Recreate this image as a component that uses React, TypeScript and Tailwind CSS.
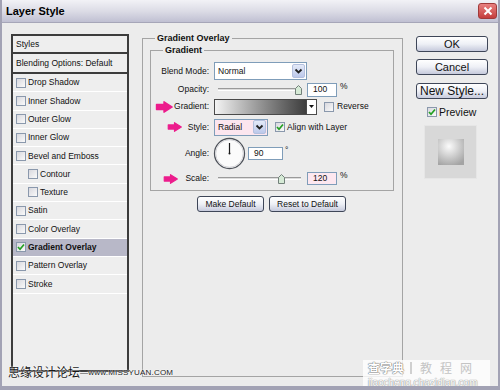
import React from "react";

const items = [
  { label: "Drop Shadow" },
  { label: "Inner Shadow" },
  { label: "Outer Glow" },
  { label: "Inner Glow" },
  { label: "Bevel and Emboss" },
  { label: "Contour", indent: true },
  { label: "Texture", indent: true },
  { label: "Satin" },
  { label: "Color Overlay" },
  { label: "Gradient Overlay", checked: true, active: true },
  { label: "Pattern Overlay" },
  { label: "Stroke" },
];

function Check({ checked = false, size = "w-[10px] h-[10px]" }: { checked?: boolean; size?: string }) {
  return (
    <span
      className={`${size} shrink-0 border border-[#8a98ac] bg-gradient-to-br from-[#d8d8de] to-[#fafafa] flex items-center justify-center`}
    >
      {checked && (
        <svg width="8" height="8" viewBox="0 0 8 8">
          <polyline points="1,4 3,6.2 7,1.5" fill="none" stroke="#22a022" strokeWidth="1.7" />
        </svg>
      )}
    </span>
  );
}

function Arrow({ w = 17 }: { w?: number }) {
  return (
    <svg width={w} height="12" viewBox="0 0 18 12" className="shrink-0">
      <path
        d="M1.5 3.5 H9 V0.8 L17.2 6 L9 11.2 V8.5 H1.5 Z"
        fill="#ec1c8c"
        stroke="#ec1c8c"
        strokeWidth="1.4"
        strokeLinejoin="round"
      />
    </svg>
  );
}

function DropBtn({ h = "h-[14px]" }: { h?: string }) {
  return (
    <span
      className={`w-[13px] ${h} shrink-0 rounded-[2px] border border-[#b4c0de] bg-gradient-to-b from-[#e4eaf8] to-[#bcc8ea] flex items-center justify-center`}
    >
      <svg width="9" height="7" viewBox="0 0 9 7">
        <polyline points="1.5,1.5 4.5,4.5 7.5,1.5" fill="none" stroke="#222" strokeWidth="1.8" />
      </svg>
    </span>
  );
}

function Slider({ thumb }: { thumb: number }) {
  return (
    <div className="relative w-[91px] h-[12px] flex items-center px-[4px]">
      <div className="w-full h-[3px] border-t border-[#9a9a9a] border-b border-b-white bg-[#dcdcdc]" />
      <svg
        width="7"
        height="10"
        viewBox="0 0 7 10"
        className="absolute top-[1px]"
        style={{ left: thumb }}
      >
        <path d="M0.5 3.5 L3.5 0.5 L6.5 3.5 V9.5 H0.5 Z" fill="#d6ead6" stroke="#72807a" strokeWidth="1" />
      </svg>
    </div>
  );
}

function Btn({ children, className = "" }: { children: React.ReactNode; className?: string }) {
  return (
    <div
      className={`h-[16px] rounded-[3px] border border-[#3e4658] bg-gradient-to-b from-white via-[#eef0f6] to-[#c6cadc] flex items-center justify-center ${className}`}
    >
      {children}
    </div>
  );
}

export default function App() {
  return (
    <div className="relative w-[500px] h-[390px] overflow-hidden bg-[#ececec] border-x-2 border-b-[4px] border-[#a2a2b4] flex flex-col font-['Liberation_Sans',Arial,sans-serif] text-[8.5px] text-[#111] leading-none">
      {/* Title bar */}
      <div className="h-[23px] shrink-0 flex items-center justify-between bg-gradient-to-b from-[#f2f2f6] via-[#dcdce6] to-[#c0c0d2] border-b border-[#a6a6b8]">
        <span className="pl-[4px] text-[11px] font-bold text-black">Layer Style</span>
        <span className="mr-[1px] w-[19px] h-[16px] rounded-[3px] border border-[#a03a3a] bg-gradient-to-b from-[#e88080] to-[#c43c3c] flex items-center justify-center">
          <svg width="10" height="10" viewBox="0 0 10 10">
            <path d="M1.5 1.5 L8.5 8.5 M8.5 1.5 L1.5 8.5" stroke="white" strokeWidth="2" />
          </svg>
        </span>
      </div>

      <div className="flex items-start">
        {/* Styles list */}
        <div className="ml-[9px] mt-[11px] w-[118px] h-[338px] border-2 border-[#3c3c3c] bg-[#eeeeee] flex flex-col">
          <div className="h-[18px] shrink-0 flex items-center pl-[3px] border-b-2 border-[#3c3c3c]">Styles</div>
          <div className="h-[20px] shrink-0 flex items-center pl-[3px] border-b-2 border-[#3c3c3c]">
            Blending Options: Default
          </div>
          {items.map((it) => (
            <div
              key={it.label}
              className={`h-[18.3px] shrink-0 flex items-center gap-[2px] border-b border-white ${
                it.indent ? "pl-[15px]" : "pl-[3px]"
              } ${it.active ? "bg-[#b8b8c8] font-bold" : ""}`}
            >
              <Check checked={it.checked} />
              <span>{it.label}</span>
            </div>
          ))}
        </div>

        {/* Gradient Overlay group */}
        <div className="relative ml-[13px] mt-[15px] w-[261px] h-[339px] border border-[#a4a4a4] flex flex-col">
          <span className="absolute left-[12px] -top-[6.5px] px-[2px] bg-[#ececec] text-[9px] font-bold leading-[11px]">
            Gradient Overlay
          </span>

          <div className="relative ml-[7px] mt-[11px] w-[244px] h-[141px] border border-[#a4a4a4] flex flex-col">
            <span className="absolute left-[12px] -top-[6.5px] px-[2px] bg-[#ececec] text-[9px] font-bold leading-[11px]">
              Gradient
            </span>

            {/* Blend Mode */}
            <div className="mt-[11px] h-[18px] flex items-center">
              <div className="w-[58px] text-right">Blend Mode:</div>
              <div className="ml-[5px] w-[93px] h-[18px] border border-[#7f9db9] bg-white flex items-center justify-between pl-[3px] pr-[1px]">
                <span>Normal</span>
                <DropBtn />
              </div>
            </div>

            {/* Opacity */}
            <div className="mt-[2px] h-[15px] flex items-center">
              <div className="w-[58px] text-right">Opacity:</div>
              <div className="ml-[5px]">
                <Slider thumb={81} />
              </div>
              <div className="ml-[2px] w-[30px] h-[14px] border border-[#7f9db9] bg-white flex items-center pl-[5px]">100</div>
              <span className="ml-[3px] self-start">%</span>
            </div>

            {/* Gradient */}
            <div className="mt-[1px] h-[17px] flex items-center">
              <div className="w-[58px] flex items-center justify-end">
                <Arrow w={18} />
                <span className="ml-[1px]">Gradient:</span>
              </div>
              <div className="ml-[5px] w-[103px] h-[16px] border border-[#4a4a4a] flex">
                <div className="flex-1 bg-gradient-to-r from-[#f4f4f4] to-[#3e3e3e]" />
                <div className="w-[10px] border-l border-[#4a4a4a] bg-white flex items-center justify-center">
                  <svg width="5" height="3" viewBox="0 0 5 3">
                    <path d="M0 0 H5 L2.5 3 Z" fill="#111" />
                  </svg>
                </div>
              </div>
              <span className="ml-[7px]">
                <Check />
              </span>
              <span className="ml-[3px]">Reverse</span>
            </div>

            {/* Style */}
            <div className="mt-[3px] h-[18px] flex items-center">
              <div className="w-[58px] flex items-center justify-end">
                <Arrow w={15} />
                <span className="ml-[6px]">Style:</span>
              </div>
              <div className="ml-[5px] w-[54px] h-[17px] border border-[#7f9db9] bg-[#fce6ef] flex items-center justify-between pl-[3px] pr-[1px]">
                <span>Radial</span>
                <DropBtn />
              </div>
              <span className="ml-[7px]">
                <Check checked />
              </span>
              <span className="ml-[2px]">Align with Layer</span>
            </div>

            {/* Angle */}
            <div className="mt-[1px] h-[32px] flex items-center">
              <div className="w-[58px] text-right">Angle:</div>
              <svg width="33" height="33" viewBox="0 0 33 33" className="ml-[4px]">
                <circle cx="16.5" cy="16.5" r="15" fill="#fbfbfb" stroke="#50545c" strokeWidth="1.3" />
                <circle cx="16.5" cy="16.5" r="13.8" fill="none" stroke="#d4d4d8" strokeWidth="1" />
                <line x1="16.5" y1="16.5" x2="16.5" y2="6" stroke="#1a1a1a" strokeWidth="1.2" />
                <circle cx="16.5" cy="16.5" r="1" fill="#1a1a1a" />
              </svg>
              <div className="ml-[2px] w-[35px] h-[13px] border border-[#7f9db9] bg-white flex items-center pl-[5px]">90</div>
              <span className="ml-[2px] self-start mt-[9px]">°</span>
            </div>

            {/* Scale */}
            <div className="mt-[2px] h-[15px] flex items-center">
              <div className="w-[58px] flex items-center justify-end">
                <Arrow w={15} />
                <span className="ml-[7px]">Scale:</span>
              </div>
              <div className="ml-[5px]">
                <Slider thumb={64} />
              </div>
              <div className="ml-[2px] w-[30px] h-[13px] border border-[#7f9db9] bg-[#fde8f0] flex items-center pl-[5px]">120</div>
              <span className="ml-[3px] self-start">%</span>
            </div>
          </div>

          <div className="mt-[5px] ml-[54px] flex gap-[5px]">
            <Btn className="w-[67px]">Make Default</Btn>
            <Btn className="w-[77px]">Reset to Default</Btn>
          </div>
        </div>

        {/* Right column */}
        <div className="ml-[13px] mt-[13px] w-[72px] flex flex-col text-[11px]">
          <Btn className="w-[72px] border-[#2a3656]">OK</Btn>
          <Btn className="mt-[7px] w-[72px]">Cancel</Btn>
          <Btn className="mt-[8px] w-[72px] text-[12px]">New Style...</Btn>
          <div className="mt-[8px] ml-[11px] flex items-center gap-[2px] text-[10.5px]">
            <Check checked />
            <span>Preview</span>
          </div>
          <div className="mt-[7px] ml-[8px] w-[53px] h-[54px] bg-[#d8d8d8] border border-[#e6e6e6] flex items-center justify-center">
            <div className="w-[26px] h-[26px] [background:radial-gradient(circle_at_42%_28%,#fbfbfb,#a4a4a4_85%)]" />
          </div>
        </div>
      </div>

      {/* Watermarks */}
      <div className="absolute left-[6px] top-[366px] flex items-end text-[#1a1a1a] [text-shadow:0_0_2px_#fff,0_0_1px_#fff]">
        <span className="text-[12px] leading-none font-['Noto_Sans_CJK_SC',sans-serif]">思缘设计论坛</span>
        <span className="text-[8px] leading-none mb-[1px] tracking-[0.2px]">—www.MISSYUAN.COM</span>
      </div>
      <div className="absolute left-[361px] top-[360px] w-[127px] h-[30px] bg-white/80 flex flex-col items-start gap-[2px] pl-[5px] pt-[1px] font-['Noto_Sans_CJK_SC',sans-serif]">
        <div className="flex items-center h-[14px] text-[12px] leading-[14px]">
          <span className="text-white font-bold [text-shadow:0_0_1px_#777,0_0_1px_#777,0_0_1px_#777]">查字典</span>
          <span className="ml-[6px] w-[2px] h-[12px] bg-[#d0d0d0]" />
          <span className="ml-[8px] tracking-[8px] text-[#c4c4c4]">教程网</span>
        </div>
        <div className="h-[11px] text-[10px] leading-[11px] text-white font-['Liberation_Sans',Arial,sans-serif] [text-shadow:0_0_1px_#888,0_0_1px_#888]">
          jiaocheng.chazidian.com
        </div>
      </div>
    </div>
  );
}
